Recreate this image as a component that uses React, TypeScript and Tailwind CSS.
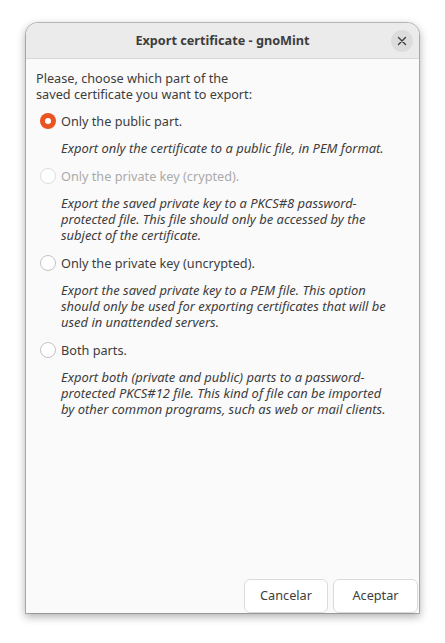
import React from 'react';

const options = [
  {
    label: 'Only the public part.',
    checked: true,
    disabled: false,
    desc: ['Export only the certificate to a public file, in PEM format.'],
  },
  {
    label: 'Only the private key (crypted).',
    checked: false,
    disabled: true,
    desc: [
      'Export the saved private key to a PKCS#8 password-',
      'protected file. This file should only be accessed by the',
      'subject of the certificate.',
    ],
  },
  {
    label: 'Only the private key (uncrypted).',
    checked: false,
    disabled: false,
    desc: [
      'Export the saved private key to a PEM file. This option',
      'should only be used for exporting certificates that will be',
      'used in unattended servers.',
    ],
  },
  {
    label: 'Both parts.',
    checked: false,
    disabled: false,
    desc: [
      'Export both (private and public) parts to a password-',
      'protected PKCS#12 file. This kind of file can be imported',
      'by other common programs, such as web or mail clients.',
    ],
  },
];

function Radio({ checked, disabled }: { checked: boolean; disabled: boolean }) {
  if (checked) {
    return (
      <span className="w-[16px] h-[16px] rounded-full bg-[#e95420] flex items-center justify-center shrink-0">
        <span className="w-[6px] h-[6px] rounded-full bg-white" />
      </span>
    );
  }
  return (
    <span
      className={`w-[16px] h-[16px] rounded-full bg-white border shrink-0 ${disabled ? 'border-[#dedede]' : 'border-[#c4c4c4]'}`}
    />
  );
}

export default function App() {
  return (
    <div className="w-full h-[643px] bg-white pt-[23px] pl-[26px] font-['Noto_Sans',sans-serif] text-[#3d3d3d]">
      <div className="w-[393px] h-[590px] flex flex-col rounded-t-[12px] bg-[#fafafa] shadow-[0_0_0_1px_rgba(0,0,0,0.22),0_3px_9px_1px_rgba(0,0,0,0.3)]">
        <div className="h-[36px] shrink-0 grid grid-cols-[1fr_auto_1fr] items-center bg-[#ebebeb] border-b border-[#d8d8d8] rounded-t-[12px]">
          <span />
          <span className="text-[12.7px] font-bold">Export certificate - gnoMint</span>
          <div className="flex justify-end pr-[6px]">
            <button className="w-[22px] h-[22px] rounded-full bg-[#dcdcdc] flex items-center justify-center" aria-label="Close">
              <svg width="10" height="10" viewBox="0 0 10 10">
                <path d="M1.5 1.5 L8.5 8.5 M8.5 1.5 L1.5 8.5" stroke="#3d3d3d" strokeWidth="1.4" strokeLinecap="round" />
              </svg>
            </button>
          </div>
        </div>

        <div className="flex-1 flex flex-col">
          <div className="flex flex-col gap-[11.5px] pl-[10px] pt-[11px] text-[12.7px] leading-[16px]">
            <p className="-mb-[1px]">
              Please, choose which part of the
              <br />
              saved certificate you want to export:
            </p>
            {options.map(o => (
              <React.Fragment key={o.label}>
                <div className="flex items-center gap-[5px] pl-[4px]">
                  <Radio checked={o.checked} disabled={o.disabled} />
                  <span className={o.disabled ? 'text-[#aaaaaa]' : ''}>{o.label}</span>
                </div>
                <p className="pl-[25px] italic text-[12.95px]">
                  {o.desc.map(l => (
                    <span key={l} className="block whitespace-nowrap">{l}</span>
                  ))}
                </p>
              </React.Fragment>
            ))}
          </div>
          <div className="flex-1" />
          <div className="flex justify-end gap-[5px] pr-[1px] pb-[0px]">
            <button className="w-[84px] h-[34px] rounded-[6px] border border-[#dadada] bg-white text-[12.7px]">Cancelar</button>
            <button className="w-[85px] h-[34px] rounded-[6px] border border-[#dadada] bg-white text-[12.7px]">Aceptar</button>
          </div>
        </div>
      </div>
    </div>
  );
}
